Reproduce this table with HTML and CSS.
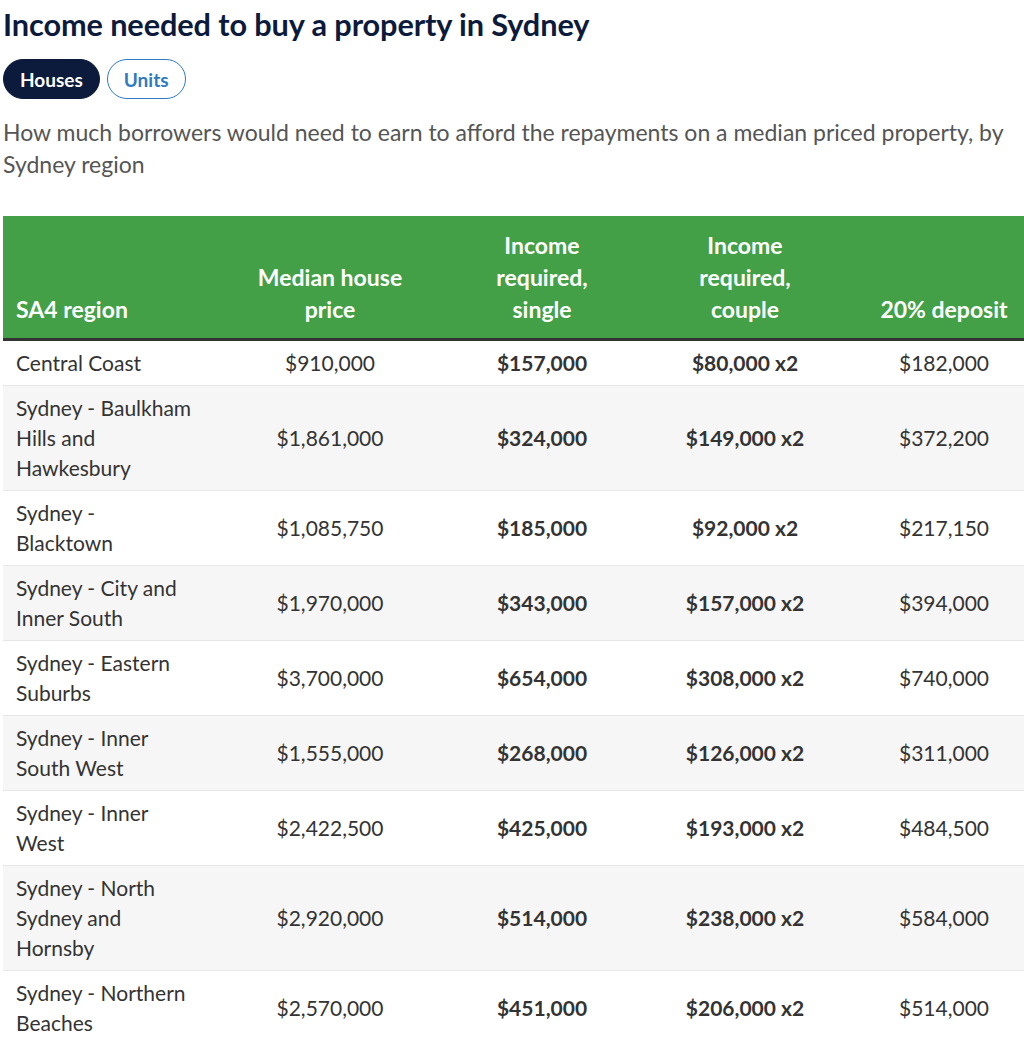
FILE: index.html
```html
<!DOCTYPE html>
<html lang="en">
<head>
<meta charset="utf-8">
<title>Income needed to buy a property in Sydney</title>
<link rel="stylesheet" href="styles.css">
</head>
<body>
<h1 class="title">Income needed to buy a property in Sydney</h1>
<div class="toggles">
  <button class="pill pill-active">Houses</button>
  <button class="pill">Units</button>
</div>
<p class="subtitle">How much borrowers would need to earn to afford the repayments on a median priced property, by Sydney region</p>
<table class="data">
  <colgroup>
    <col class="c1"><col class="c2"><col class="c3"><col class="c4"><col class="c5">
  </colgroup>
  <thead>
    <tr>
      <th class="left">SA4 region</th>
      <th>Median house<br>price</th>
      <th>Income<br>required,<br>single</th>
      <th>Income<br>required,<br>couple</th>
      <th class="last">20% deposit</th>
    </tr>
  </thead>
  <tbody>
    <tr><td class="left">Central Coast</td><td>$910,000</td><td class="b">$157,000</td><td class="b">$80,000 x2</td><td class="last">$182,000</td></tr>
    <tr><td class="left">Sydney - Baulkham Hills and Hawkesbury</td><td>$1,861,000</td><td class="b">$324,000</td><td class="b">$149,000 x2</td><td class="last">$372,200</td></tr>
    <tr><td class="left">Sydney - Blacktown</td><td>$1,085,750</td><td class="b">$185,000</td><td class="b">$92,000 x2</td><td class="last">$217,150</td></tr>
    <tr><td class="left">Sydney - City and Inner South</td><td>$1,970,000</td><td class="b">$343,000</td><td class="b">$157,000 x2</td><td class="last">$394,000</td></tr>
    <tr><td class="left">Sydney - Eastern Suburbs</td><td>$3,700,000</td><td class="b">$654,000</td><td class="b">$308,000 x2</td><td class="last">$740,000</td></tr>
    <tr><td class="left">Sydney - Inner South West</td><td>$1,555,000</td><td class="b">$268,000</td><td class="b">$126,000 x2</td><td class="last">$311,000</td></tr>
    <tr><td class="left">Sydney - Inner West</td><td>$2,422,500</td><td class="b">$425,000</td><td class="b">$193,000 x2</td><td class="last">$484,500</td></tr>
    <tr><td class="left">Sydney - North Sydney and Hornsby</td><td>$2,920,000</td><td class="b">$514,000</td><td class="b">$238,000 x2</td><td class="last">$584,000</td></tr>
    <tr><td class="left">Sydney - Northern Beaches</td><td>$2,570,000</td><td class="b">$451,000</td><td class="b">$206,000 x2</td><td class="last">$514,000</td></tr>
  </tbody>
</table>
</body>
</html>
```

FILE: styles.css
```css
html, body {
  margin: 0;
  padding: 0;
  background: #ffffff;
}
body {
  padding: 0 0 0 3px;
  font-family: "Lato", "Noto Sans", sans-serif;
  color: #333333;
  overflow: hidden;
}
.title {
  margin: 0;
  padding-top: 5px;
  font-size: 30.7px;
  line-height: 40px;
  font-weight: 700;
  color: #0c1a3c;
  letter-spacing: -0.1px;
}
.toggles {
  display: flex;
  gap: 7px;
  margin-top: 14px;
}
.pill {
  font-family: inherit;
  font-size: 19px;
  font-weight: 700;
  height: 40px;
  padding: 0 16px;
  border-radius: 20px;
  border: 1.5px solid #2f7ac0;
  background: #ffffff;
  color: #2f7ac0;
  cursor: pointer;
}
.pill-active {
  background: #0c1a3c;
  border-color: #0c1a3c;
  color: #ffffff;
}
.subtitle {
  margin: 17px 0 0;
  font-size: 23px;
  line-height: 32px;
  color: #555555;
  max-width: 1015px;
}
.data {
  margin-top: 36px;
  width: 1021px;
  border-collapse: collapse;
  table-layout: fixed;
  font-size: 21px;
}
.c1 { width: 225px; }
.c2 { width: 204px; }
.c3 { width: 220px; }
.c4 { width: 186px; }
.c5 { width: 186px; }
.data thead th {
  background: #43a047;
  color: #ffffff;
  font-weight: 700;
  font-size: 23px;
  line-height: 32px;
  text-align: center;
  vertical-align: bottom;
  padding: 13px 8px 13px;
  height: 96px;
  border-bottom: 3px solid #333333;
  white-space: nowrap;
}
.data th.left, .data td.left {
  text-align: left;
  padding-left: 13px;
}
.data td {
  line-height: 30px;
  padding: 7px 13px;
  text-align: center;
  vertical-align: middle;
  border-bottom: 1px solid #e6e6e6;
}
.data td.left {
  padding-right: 34px;
}
.data th.last, .data td.last {
  padding-left: 39px;
  padding-right: 13px;
}
.data tbody tr:nth-child(even) td {
  background: #f6f6f6;
}
.data td.b {
  font-weight: 700;
}
```
